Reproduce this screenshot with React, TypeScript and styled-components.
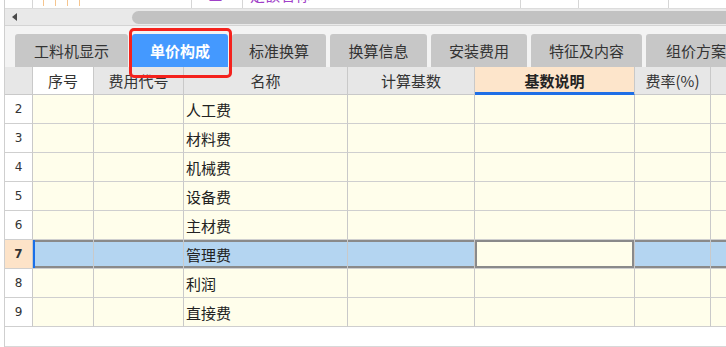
import React from 'react';
import styled, { createGlobalStyle, css } from 'styled-components';

const GlobalStyle = createGlobalStyle`
  html, body {
    margin: 0;
    padding: 0;
    background: #ffffff;
  }
  body {
    font-family: "Noto Sans CJK SC", "Noto Sans", sans-serif;
  }
`;

const columns = ['', '序号', '费用代号', '名称', '计算基数', '基数说明', '费率(%)', ''];

const tabs = [
  { label: '工料机显示', width: 113 },
  { label: '单价构成', width: 96 },
  { label: '标准换算', width: 94 },
  { label: '换算信息', width: 97 },
  { label: '安装费用', width: 96 },
  { label: '特征及内容', width: 111 },
  { label: '组价方案', width: 100 },
];

const rows = [
  { no: 2, name: '人工费' },
  { no: 3, name: '材料费' },
  { no: 4, name: '机械费' },
  { no: 5, name: '设备费' },
  { no: 6, name: '主材费' },
  { no: 7, name: '管理费' },
  { no: 8, name: '利润' },
  { no: 9, name: '直接费' },
];

const SELECTED = 7;
const ACTIVE_COL = 5;

export default function App() {
  return (
    <>
      <GlobalStyle />
      <Page>
        <Frame>
          {/* bottom edge of the grid scrolled above */}
          <Remnant>
            <RemCell $w={27} />
            <RemCell $w={158}>
              <TreeMarks>
                <Tick />
                <Tick />
                <Tick />
                <Tick />
              </TreeMarks>
            </RemCell>
            <RemCell $w={50}>
              <PurpleText $indent={16}>■</PurpleText>
            </RemCell>
            <RemCell $w={277}>
              <PurpleText $indent={7}>定额名称</PurpleText>
            </RemCell>
            <RemCell $w={57} />
            <RemCell $w={89} />
            <RemCell $w={80} $last />
          </Remnant>

          <HScroll>
            <ArrowLeft />
            <Thumb />
          </HScroll>

          <TabStrip>
            {tabs.map((t, i) => (
              <Tab key={t.label} $w={t.width} $active={i === 1}>
                {t.label}
              </Tab>
            ))}
          </TabStrip>

          <Grid>
            {columns.map((c, i) => (
              <HeadCell key={i} $col={i}>
                {c}
              </HeadCell>
            ))}
            {rows.map((r) =>
              columns.map((_, i) => {
                const sel = r.no === SELECTED;
                if (i === 0) {
                  return (
                    <NumCell key={`${r.no}-${i}`} $selected={sel}>
                      {r.no}
                    </NumCell>
                  );
                }
                return (
                  <Cell
                    key={`${r.no}-${i}`}
                    $selected={sel}
                    $current={sel && i === ACTIVE_COL}
                    $first={i === 1}
                  >
                    {i === 3 ? r.name : ''}
                  </Cell>
                );
              })
            )}
          </Grid>
          <Filler />
        </Frame>
        <Highlight />
      </Page>
    </>
  );
}

const Page = styled.div`
  position: relative;
  width: 726px;
  height: 347px;
  overflow: hidden;
  background: #ffffff;
`;

const Frame = styled.div`
  margin-left: 4px;
  border-left: 1px solid #cfcfcf;
  display: flex;
  flex-direction: column;
  height: 347px;
`;

const Remnant = styled.div`
  display: flex;
  height: 8px;
  overflow: hidden;
  background: #ffffff;
`;

const RemCell = styled.div<{ $w: number; $last?: boolean }>`
  flex: 0 0 ${(p) => p.$w}px;
  height: 8px;
  border-right: ${(p) => (p.$last ? 'none' : '1px solid #d6d6d6')};
  display: flex;
  align-items: flex-end;
  overflow: hidden;
`;

const TreeMarks = styled.div`
  display: flex;
  gap: 11px;
  margin-left: 10px;
  align-self: flex-start;
`;

const Tick = styled.span`
  width: 1px;
  height: 6px;
  background: #f6c58e;
`;

const PurpleText = styled.span<{ $indent: number }>`
  margin-left: ${(p) => p.$indent}px;
  color: #a040c8;
  font-size: 15px;
  line-height: 15px;
  margin-bottom: 6px;
  white-space: nowrap;
`;

const HScroll = styled.div`
  display: flex;
  align-items: center;
  height: 18px;
  box-sizing: border-box;
  background: #e9e9e9;
  border-top: 1px solid #dcdcdc;
  border-bottom: 1px solid #d4d4d4;
`;

const ArrowLeft = styled.div`
  width: 0;
  height: 0;
  margin-left: 7px;
  border-top: 4px solid transparent;
  border-bottom: 4px solid transparent;
  border-right: 5px solid #4a4a4a;
`;

const Thumb = styled.div`
  margin-left: 115px;
  flex: 1;
  height: 13px;
  background: #c2c2c2;
  border-radius: 7px 0 0 7px;
`;

const TabStrip = styled.div`
  display: flex;
  gap: 4px;
  height: 41px;
  box-sizing: border-box;
  padding: 8px 0 0 10px;
  background: #f3f3f3;
  overflow: hidden;
`;

const Tab = styled.div<{ $w: number; $active?: boolean }>`
  flex: 0 0 ${(p) => p.$w}px;
  height: 33px;
  display: flex;
  align-items: center;
  justify-content: center;
  border-radius: 3px 3px 0 0;
  font-size: 15px;
  white-space: nowrap;
  background: #c7c7c7;
  color: #333333;
  ${(p) =>
    p.$active &&
    css`
      background: #4499ff;
      color: #ffffff;
      font-weight: bold;
    `}
`;

const Grid = styled.div`
  display: grid;
  grid-template-columns: 28px 61px 90px 164px 127px 160px 76px 80px;
  grid-template-rows: 28px repeat(8, 29px);
  overflow: hidden;
  width: 721px;
`;

const headBg = (col: number) => {
  if (col === 1) return '#ffffff';
  if (col === ACTIVE_COL) return '#fde5cb';
  return '#e7e7e7';
};

const HeadCell = styled.div<{ $col: number }>`
  box-sizing: border-box;
  display: flex;
  align-items: center;
  justify-content: center;
  background: ${(p) => headBg(p.$col)};
  border-right: 1px solid #c9c9c9;
  border-bottom: 1px solid #c9c9c9;
  font-size: 15px;
  color: #333333;
  white-space: nowrap;
  ${(p) =>
    p.$col === ACTIVE_COL &&
    css`
      font-weight: bold;
      color: #222222;
      box-shadow: inset 0 -2px 0 #1f6fe6;
      border-bottom-color: #1f6fe6;
    `}
`;

const NumCell = styled.div<{ $selected?: boolean }>`
  box-sizing: border-box;
  display: flex;
  align-items: center;
  justify-content: center;
  background: ${(p) => (p.$selected ? '#fde3c8' : '#ffffff')};
  border-right: 1px solid #c9c9c9;
  border-bottom: 1px solid #cfcfcf;
  font-family: "DejaVu Sans", "Liberation Sans", sans-serif;
  font-size: 12px;
  font-weight: ${(p) => (p.$selected ? 'bold' : 'normal')};
  color: #333333;
`;

const Cell = styled.div<{ $selected?: boolean; $current?: boolean; $first?: boolean }>`
  box-sizing: border-box;
  display: flex;
  align-items: center;
  padding-left: 2px;
  background: #fffeeb;
  border-right: 1px solid #c9c9c9;
  border-bottom: 1px solid #cfcfcf;
  font-size: 15px;
  color: #222222;
  white-space: nowrap;
  overflow: hidden;
  ${(p) =>
    p.$selected &&
    css`
      background: #b4d5f1;
      box-shadow: inset 0 2px 0 #8a8a8a, inset 0 -2px 0 #8a8a8a;
    `}
  ${(p) =>
    p.$selected &&
    p.$first &&
    css`
      box-shadow: inset 2px 0 0 #1a6fe8, inset 0 2px 0 #8a8a8a, inset 0 -2px 0 #8a8a8a;
    `}
  ${(p) =>
    p.$current &&
    css`
      background: #fffeeb;
      box-shadow: inset 0 0 0 2px #8a8a8a;
    `}
`;

const Filler = styled.div`
  flex: 1;
  background: #ffffff;
  border-bottom: 1px solid #d8d8d8;
`;

const Highlight = styled.div`
  position: absolute;
  left: 129px;
  top: 28px;
  width: 103px;
  height: 50px;
  box-sizing: border-box;
  border: 3px solid #f4221d;
  border-radius: 5px;
  pointer-events: none;
`;
